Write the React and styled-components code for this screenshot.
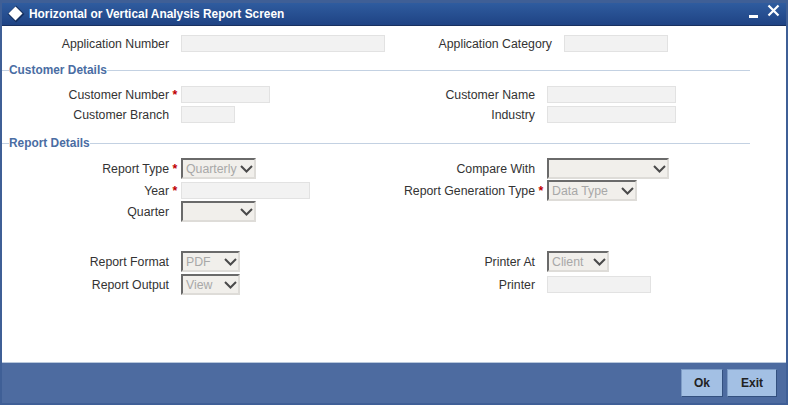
import React from "react";
import styled, { createGlobalStyle } from "styled-components";

const GlobalStyle = createGlobalStyle`
	html, body {
		margin: 0;
		padding: 0;
		background: #3d5d94;
	}
	body {
		font-family: "Liberation Sans", Arial, sans-serif;
		font-size: 12.3px;
		color: #333;
	}
`;

function Chevron() {
	return (
		<ChevronIcon width="13" height="8" viewBox="0 0 13 8">
			<path d="M1 1 L6.5 6.5 L12 1" fill="none" stroke="#4a4a4a" strokeWidth="2" />
		</ChevronIcon>
	);
}

function Select({ width, value }) {
	return (
		<SelectBox $width={width}>
			<SelectValue>{value}</SelectValue>
			<Chevron />
		</SelectBox>
	);
}

function Field({ label, required, labelWidth = 142, children }) {
	return (
		<FieldWrap>
			<Label $width={labelWidth}>{label}</Label>
			<Star>{required ? "*" : ""}</Star>
			{children}
		</FieldWrap>
	);
}

function App() {
	return (
		<Window>
			<GlobalStyle />
			<TitleBar>
				<Diamond width="18" height="18" viewBox="0 0 18 18">
					<path d="M9 0.5 L17.5 9 L9 17.5 L0.5 9 Z" fill="#16305f" />
					<path d="M8.5 1.5 L15.5 8.5 L8.5 15.5 L1.5 8.5 Z" fill="#fff" />
				</Diamond>
				<Title>Horizontal or Vertical Analysis Report Screen</Title>
				<WindowIcons>
					<svg width="10" height="5" viewBox="0 0 10 5">
						<rect x="0" y="1" width="9" height="3" fill="#fff" />
					</svg>
					<svg width="13" height="13" viewBox="0 0 13 13">
						<path d="M1.5 1.5 L11.5 11.5 M11.5 1.5 L1.5 11.5" stroke="#fff" strokeWidth="2.2" />
					</svg>
				</WindowIcons>
			</TitleBar>

			<Body>
				<Row $top={9}>
					<LeftCol>
						<Field labelWidth={167} label="Application Number">
							<Input $width={204} />
						</Field>
					</LeftCol>
					<Field labelWidth={159} label="Application Category">
						<Input $width={104} />
					</Field>
				</Row>

				<Heading $top={10}>Customer Details</Heading>
				<Row $top={8}>
					<LeftCol>
						<Field labelWidth={167} label="Customer Number" required>
							<Input $width={89} />
						</Field>
					</LeftCol>
					<Field label="Customer Name">
						<Input $width={129} />
					</Field>
				</Row>
				<Row $top={3}>
					<LeftCol>
						<Field labelWidth={167} label="Customer Branch">
							<Input $width={54} />
						</Field>
					</LeftCol>
					<Field label="Industry">
						<Input $width={129} />
					</Field>
				</Row>

				<Heading $top={12}>Report Details</Heading>
				<Row $top={7} $height={21}>
					<LeftCol>
						<Field labelWidth={167} label="Report Type" required>
							<Select width={75} value="Quarterly" />
						</Field>
					</LeftCol>
					<Field label="Compare With">
						<Select width={122} />
					</Field>
				</Row>
				<Row $top={1} $height={21}>
					<LeftCol>
						<Field labelWidth={167} label="Year" required>
							<Input $width={129} />
						</Field>
					</LeftCol>
					<Field label="Report Generation Type" required>
						<Select width={90} value="Data Type" />
					</Field>
				</Row>
				<Row $top={0} $height={21}>
					<LeftCol>
						<Field labelWidth={167} label="Quarter">
							<Select width={75} />
						</Field>
					</LeftCol>
				</Row>

				<Row $top={29} $height={21}>
					<LeftCol>
						<Field labelWidth={167} label="Report Format">
							<Select width={59} value="PDF" />
						</Field>
					</LeftCol>
					<Field label="Printer At">
						<Select width={62} value="Client" />
					</Field>
				</Row>
				<Row $top={2} $height={21}>
					<LeftCol>
						<Field labelWidth={167} label="Report Output">
							<Select width={59} value="View" />
						</Field>
					</LeftCol>
					<Field label="Printer">
						<Input $width={104} />
					</Field>
				</Row>
			</Body>

			<Footer>
				<Button $width={42}>Ok</Button>
				<Button $width={50}>Exit</Button>
			</Footer>
		</Window>
	);
}

const Window = styled.div`
	display: flex;
	flex-direction: column;
	box-sizing: border-box;
	width: 788px;
	height: 405px;
	padding: 3px 2px 2px;
	background: #3f5f96;
	overflow: hidden;
`;

const TitleBar = styled.div`
	display: flex;
	align-items: center;
	flex: none;
	box-sizing: border-box;
	height: 23px;
	padding: 0 6px 0 5px;
	background: linear-gradient(#2f5c9f, #1f4384);
	border-bottom: 1px solid #18305f;
`;

const Diamond = styled.svg`
	flex: none;
	margin-right: 4px;
`;

const Title = styled.div`
	flex: 1;
	font-size: 11.9px;
	font-weight: bold;
	color: #fff;
`;

const WindowIcons = styled.div`
	display: flex;
	align-items: center;
	gap: 8px;

	svg:first-child {
		margin-top: 5px;
	}
	svg:last-child {
		margin-top: -8px;
	}
`;

const Body = styled.div`
	flex: none;
	height: 336px;
	background: #fff;
	overflow: hidden;
`;

const Row = styled.div`
	display: flex;
	align-items: center;
	height: ${(p) => p.$height || 17}px;
	margin-top: ${(p) => p.$top}px;
`;

const LeftCol = styled.div`
	flex: none;
	width: 391px;
`;

const FieldWrap = styled.div`
	display: flex;
	align-items: center;
`;

const Label = styled.div`
	flex: none;
	width: ${(p) => p.$width}px;
	text-align: right;
	color: #333;
	white-space: nowrap;
`;

const Star = styled.span`
	flex: none;
	width: 12px;
	text-align: center;
	font-weight: bold;
	color: #c00000;
`;

const Input = styled.div`
	box-sizing: border-box;
	width: ${(p) => p.$width}px;
	height: 17px;
	background: #f2f2f2;
	border: 1px solid #e2e2e2;
`;

const SelectBox = styled.div`
	display: flex;
	align-items: center;
	box-sizing: border-box;
	width: ${(p) => p.$width}px;
	height: 21px;
	padding: 0 1px 0 3px;
	background: #f1efeb;
	border: 2px solid;
	border-color: #6a6a6a #dedcd8 #dedcd8 #6a6a6a;
`;

const SelectValue = styled.span`
	color: #a8a8a8;
	white-space: nowrap;
`;

const ChevronIcon = styled.svg`
	flex: none;
	margin-left: auto;
`;

const Heading = styled.div`
	display: flex;
	align-items: center;
	height: 16px;
	margin-top: ${(p) => p.$top}px;
	padding-right: 36px;
	font-size: 11.9px;
	font-weight: bold;
	color: #4a6da3;

	&::before {
		content: "";
		width: 7px;
		height: 1px;
		background: #c3d1e2;
	}
	&::after {
		content: "";
		flex: 1;
		height: 1px;
		background: #c3d1e2;
	}
`;

const Footer = styled.div`
	display: flex;
	flex: 1;
	align-items: center;
	justify-content: flex-end;
	gap: 4px;
	box-sizing: border-box;
	padding: 0 9px 0 0;
	background: #4d6ba0;
	border-top: 1px solid #b9c8dc;
`;

const Button = styled.button`
	box-sizing: border-box;
	width: ${(p) => p.$width}px;
	height: 28px;
	padding: 0;
	font-family: "Liberation Sans", Arial, sans-serif;
	font-size: 12px;
	font-weight: bold;
	color: #222;
	background: #a3c0e4;
	border: 1px solid;
	border-color: #7d9cc6 #33507f #33507f #7d9cc6;
`;

export default App;
